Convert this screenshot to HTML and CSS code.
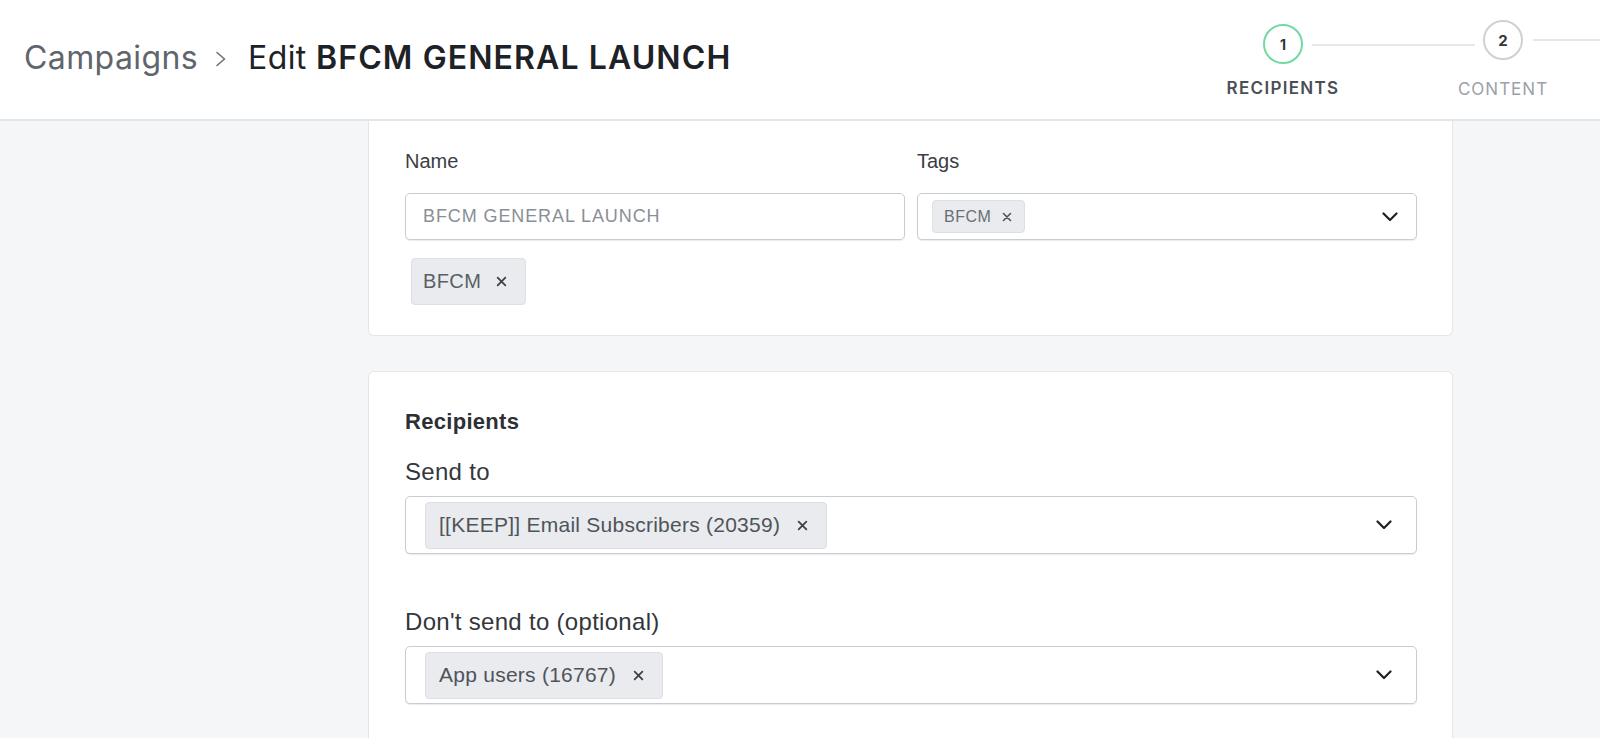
FILE: index.html
```html
<!DOCTYPE html>
<html lang="en">
<head>
<meta charset="utf-8">
<title>Edit BFCM GENERAL LAUNCH</title>
<link rel="stylesheet" href="styles.css">
</head>
<body>
<header class="topbar">
  <nav class="crumbs">
    <span class="crumb-parent">Campaigns</span>
    <svg class="crumb-sep" viewBox="0 0 12 16" aria-hidden="true"><path d="M2 1.5l7.5 6.5-7.5 6.5" fill="none" stroke="#6b7076" stroke-width="1.6" stroke-linecap="round" stroke-linejoin="round"/></svg>
    <span class="crumb-current">Edit <strong>BFCM GENERAL LAUNCH</strong></span>
  </nav>
  <ol class="steps">
    <li class="step step-active">
      <span class="step-dot">1</span>
      <span class="step-label">RECIPIENTS</span>
    </li>
    <li class="step-line"></li>
    <li class="step">
      <span class="step-dot">2</span>
      <span class="step-label">CONTENT</span>
    </li>
    <li class="step-line step-line-tail"></li>
  </ol>
</header>

<main class="page">
  <section class="card card-first">
    <div class="field-row">
      <div class="field">
        <label class="field-label">Name</label>
        <div class="text-input">BFCM GENERAL LAUNCH</div>
      </div>
      <div class="field">
        <label class="field-label">Tags</label>
        <div class="select select-sm">
          <span class="chip chip-sm">BFCM
            <svg class="chip-x" viewBox="0 0 10 10" aria-hidden="true"><path d="M1.5 1.5l7 7M8.5 1.5l-7 7" stroke="#4a4e54" stroke-width="1.5" stroke-linecap="round"/></svg>
          </span>
          <svg class="chevron" viewBox="0 0 16 10" aria-hidden="true"><path d="M1.5 1.5l6.5 6.5 6.5-6.5" fill="none" stroke="#1d2125" stroke-width="2.2" stroke-linecap="round" stroke-linejoin="round"/></svg>
        </div>
      </div>
    </div>
    <div class="tag-list">
      <span class="chip chip-md">BFCM
        <svg class="chip-x" viewBox="0 0 10 10" aria-hidden="true"><path d="M1.5 1.5l7 7M8.5 1.5l-7 7" stroke="#3c4046" stroke-width="1.6" stroke-linecap="round"/></svg>
      </span>
    </div>
  </section>

  <section class="card card-open">
    <h2 class="section-title">Recipients</h2>
    <div class="field">
      <label class="field-label field-label-lg">Send to</label>
      <div class="select select-lg">
        <span class="chip">[[KEEP]] Email Subscribers (20359)
          <svg class="chip-x" viewBox="0 0 10 10" aria-hidden="true"><path d="M1.5 1.5l7 7M8.5 1.5l-7 7" stroke="#3c4046" stroke-width="1.6" stroke-linecap="round"/></svg>
        </span>
        <svg class="chevron" viewBox="0 0 16 10" aria-hidden="true"><path d="M1.5 1.5l6.5 6.5 6.5-6.5" fill="none" stroke="#1d2125" stroke-width="2.2" stroke-linecap="round" stroke-linejoin="round"/></svg>
      </div>
    </div>
    <div class="field field-spaced">
      <label class="field-label field-label-lg">Don't send to (optional)</label>
      <div class="select select-lg">
        <span class="chip">App users (16767)
          <svg class="chip-x" viewBox="0 0 10 10" aria-hidden="true"><path d="M1.5 1.5l7 7M8.5 1.5l-7 7" stroke="#3c4046" stroke-width="1.6" stroke-linecap="round"/></svg>
        </span>
        <svg class="chevron" viewBox="0 0 16 10" aria-hidden="true"><path d="M1.5 1.5l6.5 6.5 6.5-6.5" fill="none" stroke="#1d2125" stroke-width="2.2" stroke-linecap="round" stroke-linejoin="round"/></svg>
      </div>
    </div>
  </section>
</main>
</body>
</html>
```

FILE: styles.css
```css
* { box-sizing: border-box; }

html, body { margin: 0; }

body {
  height: 738px;
  overflow: hidden;
  background: #f5f6f8;
  font-family: "Liberation Sans", Arial, sans-serif;
  color: #2b2f33;
}

/* ---------- top bar ---------- */
.topbar {
  display: flex;
  justify-content: space-between;
  align-items: flex-start;
  height: 121px;
  background: #fff;
  border-bottom: 2px solid #e2e5e9;
}

.crumbs {
  display: flex;
  align-items: center;
  margin: 38px 0 0 24px;
  font-family: Inter, "Liberation Sans", sans-serif;
  font-size: 32px;
  line-height: 40px;
  letter-spacing: 0.4px;
  white-space: nowrap;
}

.crumb-parent { color: #60656c; }

.crumb-sep {
  width: 12px;
  height: 16px;
  margin: 2px 21px 0 17px;
}

.crumb-current { color: #1e2226; }

.crumb-current strong {
  font-weight: 600;
  letter-spacing: 1.1px;
}

/* wizard progress */
.steps {
  list-style: none;
  margin: 0;
  padding: 0;
  display: flex;
  align-items: flex-start;
  width: 337px;
  font-family: Inter, "Liberation Sans", sans-serif;
}

.step {
  flex: none;
  width: 40px;
  display: flex;
  flex-direction: column;
  align-items: center;
}

.step-dot {
  width: 40px;
  height: 40px;
  margin-top: 20px;
  border: 2px solid #cdd1d6;
  border-radius: 50%;
  display: flex;
  align-items: center;
  justify-content: center;
  font-size: 15px;
  font-weight: 700;
  color: #30353a;
}

.step-active .step-dot {
  margin-top: 24px;
  border-color: #74d9a0;
  font-size: 14px;
}

.step-label {
  margin-top: 19px;
  white-space: nowrap;
  font-size: 17px;
  line-height: 20px;
  letter-spacing: 1px;
  color: #9ca1a7;
}

.step-active .step-label {
  margin-top: 14px;
  font-weight: 600;
  letter-spacing: 1.3px;
  color: #4a4f56;
}

.step-line {
  flex: none;
  width: 163px;
  height: 2px;
  margin: 44px 8px 0 9px;
  background: #e5e7ea;
}

.step-line-tail {
  flex: 1;
  width: auto;
  margin: 39px 0 0 10px;
}

/* ---------- page ---------- */
.page { padding-left: 368px; }

.card {
  width: 1085px;
  background: #fff;
  border: 1px solid #e4e6ea;
  border-radius: 6px;
  padding: 37px 35px 30px 36px;
}

.card-first {
  border-top: 0;
  border-radius: 0 0 6px 6px;
  padding-top: 28px;
}

/* the recipients card keeps going below the fold */
.card-open {
  border-bottom: 0;
  border-radius: 6px 6px 0 0;
  padding-bottom: 36px;
}

.card + .card { margin-top: 35px; }

.field-row {
  display: grid;
  grid-template-columns: 1fr 1fr;
  column-gap: 12px;
}

.field-label {
  display: block;
  margin-bottom: 20px;
  font-size: 20px;
  line-height: 24px;
  color: #3a3e43;
}

.field-label-lg {
  margin-bottom: 10px;
  font-size: 24px;
  line-height: 28px;
  letter-spacing: 0.3px;
  color: #33373c;
}

.field-spaced { margin-top: 54px; }

.section-title {
  margin: 0 0 23px;
  font-size: 22px;
  line-height: 26px;
  font-weight: 700;
  letter-spacing: 0.3px;
  color: #2c3035;
}

.text-input {
  height: 47px;
  padding: 0 17px;
  display: flex;
  align-items: center;
  border: 1px solid #c9ccd1;
  border-radius: 5px;
  box-shadow: 0 1px 1px rgba(0, 0, 0, 0.08);
  font-size: 18px;
  letter-spacing: 0.9px;
  color: #8a8f95;
}

.select {
  display: flex;
  align-items: center;
  border: 1px solid #c9ccd1;
  border-radius: 5px;
  box-shadow: 0 1px 1px rgba(0, 0, 0, 0.08);
  background: #fff;
}

.select-sm {
  height: 47px;
  padding: 0 18px 0 14px;
}

.select-lg {
  height: 58px;
  padding: 0 24px 0 19px;
}

.chevron {
  width: 16px;
  height: 10px;
  margin-left: auto;
}

.chip {
  display: inline-flex;
  align-items: center;
  height: 47px;
  padding: 0 18px 0 13px;
  gap: 17px;
  background: #e9ebee;
  border: 1px solid #dcdfe3;
  border-radius: 4px;
  font-size: 21px;
  letter-spacing: 0.25px;
  color: #4f545a;
  white-space: nowrap;
}

.chip-x {
  width: 11px;
  height: 11px;
  flex: none;
}

.chip-sm {
  height: 33px;
  padding: 0 12px 0 11px;
  gap: 11px;
  font-size: 16px;
  letter-spacing: 0.5px;
  color: #6a6f75;
}

.chip-sm .chip-x { width: 10px; height: 10px; }

.tag-list {
  display: flex;
  margin-top: 18px;
  padding-left: 6px;
}

.chip-md {
  font-size: 20px;
  letter-spacing: 0.4px;
  padding: 0 18px 0 11px;
  gap: 15px;
  color: #5a5f65;
}
```
